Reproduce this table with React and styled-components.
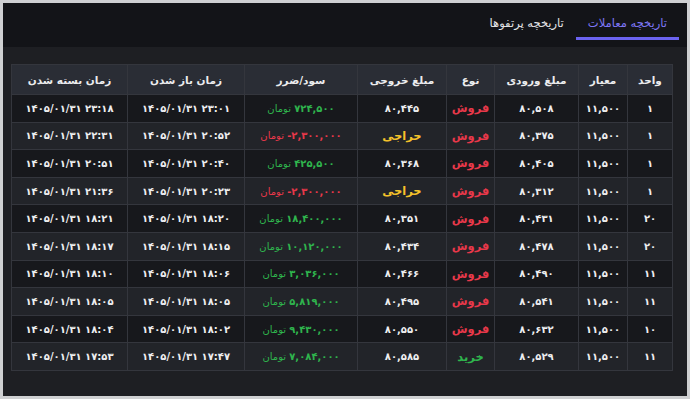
import React, { useState } from 'react';
import styled, { createGlobalStyle } from 'styled-components';

const GlobalStyle = createGlobalStyle`
  html, body {
    margin: 0;
    padding: 0;
    background: #cfd0d2;
  }
  body {
    padding: 3px;
    font-family: "DejaVu Sans", sans-serif;
  }
  * { box-sizing: border-box; }
`;

const fa = (s) => String(s).replace(/\d/g, (d) => '۰۱۲۳۴۵۶۷۸۹'[d]);

const columns = [
  { title: 'واحد', width: 45 },
  { title: 'معیار', width: 49 },
  { title: 'مبلغ ورودی', width: 84 },
  { title: 'نوع', width: 48 },
  { title: 'مبلغ خروجی', width: 89 },
  { title: 'سود/ضرر', width: 113 },
  { title: 'زمان باز شدن', width: 117 },
  { title: 'زمان بسته شدن', width: 116 },
];

const trades = [
  { unit: '1', entry: '80,508', side: 'sell', exit: '80,445', pnl: '724,500', open: '23:01', close: '23:18' },
  { unit: '1', entry: '80,375', side: 'sell', exit: null, pnl: '-2,300,000', open: '20:52', close: '22:31' },
  { unit: '1', entry: '80,405', side: 'sell', exit: '80,368', pnl: '425,500', open: '20:40', close: '20:51' },
  { unit: '1', entry: '80,312', side: 'sell', exit: null, pnl: '-2,300,000', open: '20:23', close: '21:36' },
  { unit: '20', entry: '80,431', side: 'sell', exit: '80,351', pnl: '18,400,000', open: '18:20', close: '18:21' },
  { unit: '20', entry: '80,478', side: 'sell', exit: '80,434', pnl: '10,120,000', open: '18:15', close: '18:17' },
  { unit: '11', entry: '80,490', side: 'sell', exit: '80,466', pnl: '3,036,000', open: '18:06', close: '18:10' },
  { unit: '11', entry: '80,541', side: 'sell', exit: '80,495', pnl: '5,819,000', open: '18:05', close: '18:05' },
  { unit: '10', entry: '80,632', side: 'sell', exit: '80,550', pnl: '9,430,000', open: '18:02', close: '18:04' },
  { unit: '11', entry: '80,529', side: 'buy', exit: '80,585', pnl: '7,084,000', open: '17:47', close: '17:53' },
];

const DATE = '1405/01/31';

const App = () => {
  const [tab, setTab] = useState('trades');

  return (
    <>
      <GlobalStyle />
      <Panel dir="rtl">
        <TabBar>
          <Tab $active={tab === 'trades'} onClick={() => setTab('trades')}>تاریخچه معاملات</Tab>
          <Tab $active={tab === 'portfolio'} onClick={() => setTab('portfolio')}>تاریخچه پرتفوها</Tab>
        </TabBar>
        <Body>
          <Table>
            <colgroup>
              {columns.map((c) => <col key={c.title} style={{ width: c.width }} />)}
            </colgroup>
            <thead>
              <tr>
                {columns.map((c) => <Th key={c.title}>{c.title}</Th>)}
              </tr>
            </thead>
            <tbody>
              {trades.map((t, i) => {
                const loss = t.pnl.startsWith('-');
                return (
                  <Row key={i}>
                    <Td>{fa(t.unit)}</Td>
                    <Td>{fa('11,500')}</Td>
                    <Td>{fa(t.entry)}</Td>
                    <Td><Side $kind={t.side}>{t.side === 'buy' ? 'خرید' : 'فروش'}</Side></Td>
                    <Td>{t.exit ? fa(t.exit) : <Auction>حراجی</Auction>}</Td>
                    <Td>
                      <Pnl $loss={loss}>
                        <PnlAmount $loss={loss}>{fa(t.pnl)}</PnlAmount> تومان
                      </Pnl>
                    </Td>
                    <Td><Stamp>{fa(`${DATE} ${t.open}`)}</Stamp></Td>
                    <Td><Stamp>{fa(`${DATE} ${t.close}`)}</Stamp></Td>
                  </Row>
                );
              })}
            </tbody>
          </Table>
        </Body>
      </Panel>
    </>
  );
};

const Panel = styled.div`
  width: 684px;
  height: 393px;
  background: #1e1f23;
  display: flex;
  flex-direction: column;
`;

const TabBar = styled.div`
  height: 44px;
  background: #131418;
  display: flex;
  align-items: flex-start;
  padding: 6px 8px 0;
`;

const Tab = styled.button`
  height: 31px;
  padding: 0 12px;
  background: none;
  border: none;
  border-bottom: 3px solid ${(p) => (p.$active ? '#6b63f0' : 'transparent')};
  color: ${(p) => (p.$active ? '#7d76f5' : '#e4e4e6')};
  font-family: "DejaVu Sans", sans-serif;
  font-size: 11.5px;
  cursor: pointer;
`;

const Body = styled.div`
  flex: 1;
  padding: 17px 14px 0 9px;
`;

const Table = styled.table`
  width: 661px;
  table-layout: fixed;
  border-collapse: collapse;
  border: 1px solid #34363d;
`;

const Th = styled.th`
  height: 30px;
  background: #2a2d35;
  color: #ececee;
  font-size: 10.5px;
  font-weight: 700;
  text-align: center;
  border: 1px solid #34363d;
  padding: 0;
`;

const Row = styled.tr`
  height: 27.6px;
  background: #17181c;
  &:nth-child(even) {
    background: #222429;
  }
`;

const Td = styled.td`
  color: #eeeef0;
  font-size: 10px;
  font-weight: 600;
  text-align: center;
  border: 1px solid #34363d;
  padding: 0;
  white-space: nowrap;
`;

const Side = styled.span`
  color: ${(p) => (p.$kind === 'buy' ? '#2fb44d' : '#e8384a')};
  font-weight: 700;
  font-size: 11.5px;
`;

const Auction = styled.span`
  color: #f4c22b;
  font-weight: 700;
  font-size: 11.5px;
`;

const Pnl = styled.span`
  color: ${(p) => (p.$loss ? '#e8384a' : '#2fb44d')};
  font-weight: 400;
`;

const PnlAmount = styled.span`
  direction: ltr;
  unicode-bidi: isolate;
  font-weight: ${(p) => (p.$loss ? 600 : 700)};
`;

const Stamp = styled.span`
  direction: ltr;
  unicode-bidi: isolate;
  letter-spacing: -0.4px;
`;

export default App;
